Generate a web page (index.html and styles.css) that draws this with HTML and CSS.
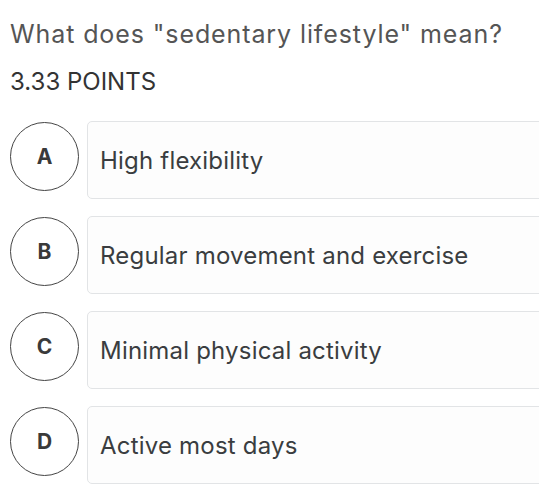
FILE: index.html
```html
<!DOCTYPE html>
<html>
<head>
<meta charset="utf-8">
<link rel="stylesheet" href="styles.css">
</head>
<body>
<div class="quiz">
  <h1 class="question">What does "sedentary lifestyle" mean?</h1>
  <div class="points">3.33 POINTS</div>
  <div class="options">
    <div class="option">
      <div class="letter">A</div>
      <div class="answer">High flexibility</div>
    </div>
    <div class="option">
      <div class="letter">B</div>
      <div class="answer">Regular movement and exercise</div>
    </div>
    <div class="option">
      <div class="letter">C</div>
      <div class="answer">Minimal physical activity</div>
    </div>
    <div class="option">
      <div class="letter">D</div>
      <div class="answer">Active most days</div>
    </div>
  </div>
</div>
</body>
</html>
```

FILE: styles.css
```css
html, body {
  margin: 0;
  padding: 0;
  background: #ffffff;
}
body {
  font-family: Inter, "Noto Sans", sans-serif;
  overflow: hidden;
}
.quiz {
  padding: 18px 0 0 10px;
}
.question {
  margin: 0;
  font-size: 25px;
  font-weight: 400;
  color: #555555;
  line-height: 32px;
  letter-spacing: 0.9px;
}
.points {
  margin-top: 18px;
  font-size: 24px;
  color: #333333;
  line-height: 28px;
}
.options {
  margin-top: 25px;
  display: flex;
  flex-direction: column;
  gap: 17px;
}
.option {
  display: flex;
  align-items: flex-start;
  gap: 8px;
}
.letter {
  flex: none;
  width: 67px;
  height: 67px;
  margin-top: 1px;
  border: 1.5px solid #444444;
  border-radius: 50%;
  display: flex;
  align-items: center;
  justify-content: center;
  font-size: 21px;
  font-weight: 700;
  color: #3a3a3a;
}
.answer {
  flex: 1;
  height: 76px;
  margin-right: -20px;
  border: 1px solid #e2e4e6;
  border-radius: 5px;
  background: #fdfdfd;
  display: flex;
  align-items: center;
  padding-left: 12px;
  font-size: 24px;
  letter-spacing: 0.2px;
  color: #3a3d40;
}
```
